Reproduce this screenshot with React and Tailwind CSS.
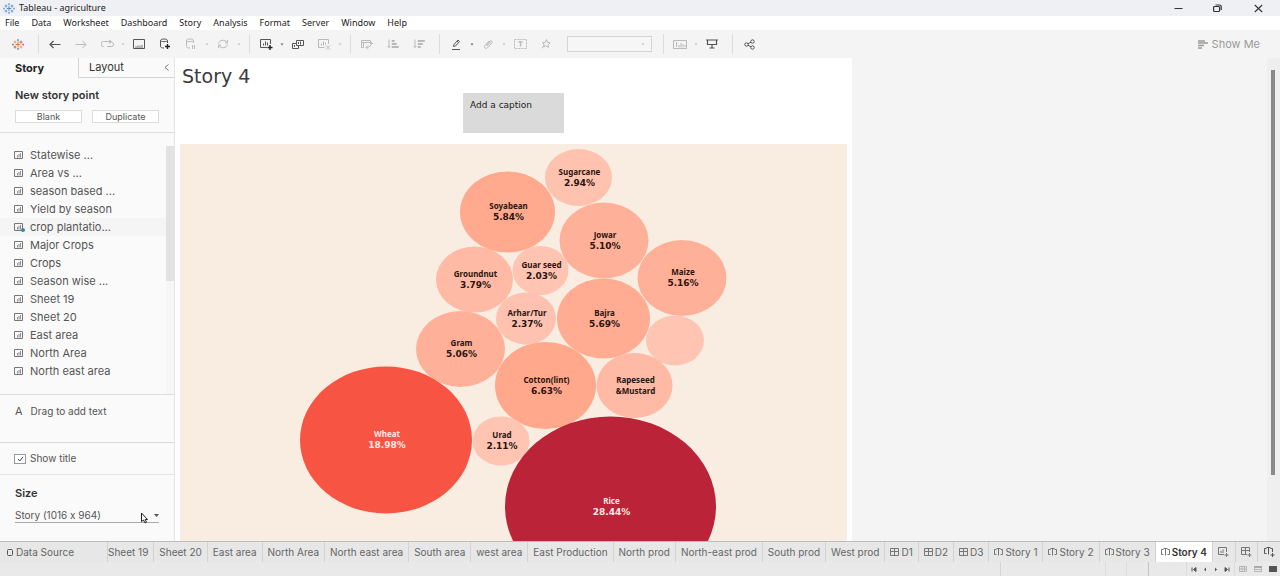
import React from "react";

const I = ({ children, className = "", w = 12, h = 12, box }) => (
  <svg width={w} height={h} viewBox={box || `0 0 ${w} ${h}`} fill="none" stroke="currentColor" strokeWidth="1" className={`shrink-0 ${className}`} aria-hidden="true">
    {children}
  </svg>
);

const TableauMark = ({ tint }) => (
  <I w={12} h={11}>
    <path d="M6 3v5M3.7 5.5h4.6" stroke={tint ? "#5d8fc4" : "#e8762d"} />
    <path d="M6 0v2.4M5 1.2h2M6 8.6V11M5 9.8h2" stroke={tint ? "#7fa8d6" : "#7a91ad"} />
    <path d="M3 1.6v3M1.6 3h2.8M9 6.6v3M7.6 8h2.8" stroke={tint ? "#6c9ccd" : "#eb9a6a"} />
    <path d="M9 1.6v3M7.6 3h2.8M3 6.6v3M1.6 8h2.8" stroke={tint ? "#6c9ccd" : "#7b8694"} />
    <path d="M.8 4.6v2M0 5.5h1.8M11.2 4.6v2M10.2 5.5H12" stroke={tint ? "#7fa8d6" : "#d0647a"} />
  </I>
);

const Tool = ({ label, dim, children }) => (
  <button aria-label={label} className={`flex h-6 w-[26px] shrink-0 items-center justify-center ${dim ? "text-[#b9b9b9]" : "text-[#555]"}`}>
    {children}
  </button>
);
const Dot = ({ dim }) => (
  <span className="flex w-[6px] shrink-0 justify-center">
    <I w={4} h={3} className={dim ? "text-[#c4c4c4]" : "text-[#666]"}>
      <path d="M.5 .5h3L2 2.5z" fill="currentColor" stroke="none" />
    </I>
  </span>
);
const Sep = () => (
  <span className="flex w-[11px] shrink-0 pl-[7px]">
    <span className="h-5 w-px bg-[#dcdcdc]" />
  </span>
);

const menus = ["File", "Data", "Worksheet", "Dashboard", "Story", "Analysis", "Format", "Server", "Window", "Help"];

const sheets = ["Statewise ...", "Area vs ...", "season based ...", "Yield by season", "crop plantatio...", "Major Crops", "Crops", "Season wise ...", "Sheet 19", "Sheet 20", "East area", "North Area", "North east area"];

const SheetIcon = ({ used }) => (
  <I w={11} h={10} className="text-[#777]">
    <path d="M.5 1.5h8v7h-8z" />
    <path d="M3.5 5v2.5M5 4v3.5M6.5 3v4.5" strokeWidth=".8" />
    {used && <circle cx="9" cy="8" r="2" fill="#3b84a8" stroke="none" />}
  </I>
);
const DashIcon = () => (
  <I w={9} h={8} className="text-[#777]">
    <path d="M.5 .5h8v7h-8zM4.500 .5v7M.5 3.5h8" />
  </I>
);
const StoryIcon = () => (
  <I w={9} h={8} className="text-[#777]">
    <path d="M2.500 6.500H.5v-5h2M6.500 6.500h2v-5h-2M2.500 .5h4M4.500 .5v7" />
  </I>
);

const tabs = [
  ["Sheet 20"], ["East area"], ["North Area"], ["North east area"], ["South area"], ["west area"],
  ["East Production"], ["North prod"], ["North-east prod"], ["South prod"], ["West prod"],
  ["D1", "dash"], ["D2", "dash"], ["D3", "dash"],
  ["Story 1", "story"], ["Story 2", "story"], ["Story 3", "story"], ["Story 4", "story"],
];

const bubbles = [
  ["Sugarcane", "2.94%", 398.5, 33.5, 33.5, 28.5, "#ffc2af"],
  ["Soyabean", "5.84%", 327.5, 68, 47.5, 40.5, "#ffaa8f"],
  ["Jowar", "5.10%", 424, 96.5, 44.5, 38, "#ffb098"],
  ["Maize", "5.16%", 502, 134, 44.5, 38, "#ffb098"],
  ["Groundnut", "3.79%", 294.500, 135.5, 38.5, 33, "#ffbaa5"],
  ["Guar seed", "2.03%", 360.5, 126.5, 28, 24.5, "#ffc4b2"],
  ["Arhar/Tur", "2.37%", 346, 174.5, 30, 26, "#ffc2b0"],
  ["Bajra", "5.69%", 423.5, 174.5, 46.5, 40, "#ffac92"],
  ["", "", 495, 196.5, 29, 25, "#ffc4b2"],
  ["Gram", "5.06%", 280.5, 205, 44.5, 38, "#ffb098"],
  ["Cotton(lint)", "6.63%", 365.5, 241.5, 50.5, 43.5, "#ffa88c"],
  ["Rapeseed", "&Mustard", 454.5, 241.5, 38, 32.5, "#ffbaa5"],
  ["Urad", "2.11%", 321, 297, 28.5, 24.5, "#ffc4b2"],
  ["Wheat", "18.98%", 206, 296, 86, 73.5, "#f85444"],
  ["Rice", "28.44%", 430.5, 362.5, 105.5, 90, "#bb2338"],
];

function Toolbar() {
  return (
    <div className="flex h-7 shrink-0 items-center bg-[#f4f4f4] pl-[5px]">
      <Tool label="Start page"><TableauMark /></Tool>
      <Sep />
      <Tool label="Undo"><I w={12} h={9}><path d="M11.500 4.500H1M4.500 1L1 4.500 4.500 8" strokeWidth="1.2" /></I></Tool>
      <Tool label="Redo" dim><I w={12} h={9}><path d="M.5 4.500H11M7.500 1L11 4.500 7.500 8" /></I></Tool>
      <Tool label="Replay" dim><I w={13} h={8}><path d="M3 6.500H2.500a2.500 2.500 0 0 1 0-5H10M8 0l2.500 1.500L8 3.500M10.500 2.500a2 2 0 0 1 0 4H6" /></I></Tool>
      <Dot dim />
      <Tool label="Save"><I w={12} h={10}><path d="M.5 .5h11v9H.5z" /><path d="M3 9.500V7M5 9.500V6.500M7 9.500V6.500M9 9.500V6" strokeWidth=".8" /></I></Tool>
      <Tool label="New data source"><I w={12} h={12}><path d="M8.500 5V2.500C8.500 0.500 1.500 .5 1.500 2.500v6c0 1 1.500 1.500 3.500 1.500M1.500 2.500c0 1.500 7 1.500 7 0" /><path d="M8.500 6v5M6 8.500h5" strokeWidth="1.4" stroke="#222" /></I></Tool>
      <Tool label="Pause updates" dim><I w={12} h={12}><path d="M8.500 5V2.500C8.500 0.500 1.500 .5 1.500 2.500v6c0 1 1.500 1.500 3.500 1.500M1.500 2.500c0 1.500 7 1.500 7 0M7.500 7v4M9.500 7v4" /></I></Tool>
      <Dot dim />
      <Tool label="Refresh" dim><I w={12} h={10}><path d="M1.500 4.500C2 1 8 0 10 3.500M10.500 1v3H8M10.500 5.500C10 9 4 10 2 6.500M1.500 9V6H4" /></I></Tool>
      <Dot dim />
      <Sep />
      <Tool label="New worksheet"><I w={13} h={12}><path d="M7 9.500H.5v-8h10V6M3.500 5.500v2M5.500 3.500v4M7.500 4.500v3" /><path d="M10 7v5M7.500 9.500h5" strokeWidth="1.4" stroke="#222" /></I></Tool>
      <Dot />
      <Tool label="Duplicate"><I w={13} h={11}><path d="M4.500 1.500h7v5h-7zM4.500 4.500h-4v5h6v-3M6.500 3v2M8.500 2.500v3M2.500 6v2" /></I></Tool>
      <Tool label="Clear sheet" dim><I w={13} h={12}><path d="M6.500 9.500h-6v-8h10V6M3.500 5.500v2M5.500 3.500v4M7.500 4.500v2M8 7.500l4 4M12 7.500l-4 4" /></I></Tool>
      <Dot dim />
      <Sep />
      <Tool label="Swap rows and columns" dim><I w={12} h={11}><path d="M.5 1.500h9v2h-9zM.5 3.500v5h2v-5M10.500 3.500c0 3-2 5-5 5M7 6.500l-2 2 2 2M9 5L10.500 3.500 12 5" /></I></Tool>
      <Tool label="Sort ascending" dim><I w={12} h={10}><path d="M2 .5v8M.5 7L2 8.500 3.500 7M5 1.500h2.500v1H5zM5 4.500h4.500v1H5zM5 7.500h6.500v1H5z" /></I></Tool>
      <Tool label="Sort descending" dim><I w={12} h={10}><path d="M2 .5v8M.5 7L2 8.500 3.500 7M5 1.500h6.500v1H5zM5 4.500h4.500v1H5zM5 7.500h2.500v1H5z" /></I></Tool>
      <Sep />
      <Tool label="Highlight"><I w={10} h={11}><path d="M1 10.500h8M2.500 7.500L3 5.500 7 1l1.500 1.500L4.500 7zM6 2l1.500 1.500" /></I></Tool>
      <Dot />
      <Tool label="Group members" dim><I w={11} h={11}><path d="M3 6.500L7 2c1-1 3 .5 2 1.800L4.500 8.800c-1.500 1.500-4-.3-2.700-2L6 2M4 7l3.500-4" /></I></Tool>
      <Dot dim />
      <Tool label="Show mark labels" dim><I w={13} h={10}><path d="M.5 .5h12v9H.5z" strokeDasharray="2 1" /><path d="M4.500 3h4M6.500 3v4.500" strokeWidth="1.3" /></I></Tool>
      <Tool label="Fix axes" dim><I w={10} h={10}><path d="M5.500 .5l1 2.700 2.700.6-2 1.900.2 2.600-2.600-1.500-2.300 1 .6-2.600L1.500 3.800l2.700-.5zM3 6.800L.8 9.300" /></I></Tool>
      <select aria-label="Fit" defaultValue="" className="ml-2 h-4 w-[85px] shrink-0 appearance-none border border-[#d5d5d5] bg-[#f6f6f6] text-[9px]">
        <option value=""></option>
      </select>
      <span className="-ml-3 mr-1.5 flex"><Dot dim /></span>
      <span className="ml-1 flex"><Sep /></span>
      <Tool label="Show cards" dim><I w={14} h={9}><path d="M.5 .5h13v8H.5zM3.500 2v5M6 5v2.500M8 3v4.500M10 4v3.500M12 5v2" /></I></Tool>
      <Dot dim />
      <Tool label="Presentation mode"><I w={12} h={10}><path d="M0 1h12M1.500 1v4.500h9V1M6 5.500v3M3.500 9h5" strokeWidth="1.2" /></I></Tool>
      <Sep />
      <Tool label="Share"><I w={11} h={11}><circle cx="2.500" cy="5.500" r="1.700" /><circle cx="8.500" cy="2.500" r="1.700" /><circle cx="8.500" cy="8.500" r="1.700" /><path d="M4 4.700l3-1.500M4 6.300l3 1.500" /></I></Tool>
      <button className="ml-auto mr-5 flex items-center gap-1 text-[11px] text-[#9a9a9a]">
        <I w={10} h={9}><path d="M0 1h7M0 3h10M0 5.500h6M0 8h4" strokeWidth="1.5" /></I>
        Show Me
      </button>
    </div>
  );
}

function Sidebar() {
  return (
    <aside className="flex w-[175px] shrink-0 flex-col border-r border-[#e6e6e6] bg-[#fafafa] text-[#555]">
      <div className="flex h-5 shrink-0 text-[11px]">
        <button className="w-[78px] shrink-0 pl-[15px] text-left font-bold text-[#222]">Story</button>
        <button className="flex-1 border-b border-l border-[#d4d4d4] pl-2.5 text-left text-[#333]">Layout</button>
        <button aria-label="Collapse pane" className="flex w-2.5 items-center border-b border-[#d4d4d4] text-[#777]">
          <I w={5} h={7}><path d="M4.500 .5l-3.500 3 3.500 3" /></I>
        </button>
      </div>
      <section className="shrink-0 border-b border-[#dedede] px-[15px] pb-[9px] pt-2.5">
        <h2 className="text-[11px] font-semibold leading-[15px] text-[#333]">New story point</h2>
        <div className="mt-[7px] flex gap-2.5 text-[9px]">
          <button className="h-[13px] w-[67px] border border-[#dcdcdc] bg-white leading-[11px]">Blank</button>
          <button className="h-[13px] w-[67px] border border-[#dcdcdc] bg-white leading-[11px]">Duplicate</button>
        </div>
      </section>
      <div className="flex min-h-0 flex-1 overflow-hidden pt-[13px]">
        <ul className="min-w-0 flex-1">
          {sheets.map((s) => (
            <li key={s} className={`flex h-[18px] items-center gap-[5px] pl-3.5 text-[11px] ${s.startsWith("crop") ? "bg-[#f5f5f5]" : ""}`}>
              <SheetIcon used={s.startsWith("crop")} />
              {s}
            </li>
          ))}
        </ul>
        <div className="w-2 bg-[#f6f6f6]">
          <div className="h-[135px] bg-[#e2e2e2]" />
        </div>
      </div>
      <div className="flex h-12 shrink-0 gap-2 border-t border-[#dcdcdc] pl-[15px] pt-[9px] text-[10px] leading-[15px]">
        <span className="text-[11px]">A</span>
        <span>Drag to add text</span>
      </div>
      <label className="flex h-8 shrink-0 items-center gap-1 border-t border-[#d8d8d8] pl-3.5 text-[10px]">
        <span className="grid place-items-center">
          <input type="checkbox" defaultChecked className="col-start-1 row-start-1 h-2.5 w-3 appearance-none border border-[#999] bg-white" />
          <I w={7} h={6} className="pointer-events-none col-start-1 row-start-1 text-[#444]"><path d="M1 3l1.800 2L6 .8" /></I>
        </span>
        Show title
      </label>
      <section className="h-[67px] shrink-0 border-t border-[#e4e4e4] px-[15px] pt-[11px]">
        <label htmlFor="size" className="block text-[11px] font-semibold leading-[15px] text-[#333]">Size</label>
        <div className="relative mt-[7px] flex h-[15px] items-center border-b border-[#aaa]">
          <select id="size" className="w-full appearance-none bg-transparent text-[10px]">
            <option>Story (1016 x 964)</option>
          </select>
          <I w={5} h={3} className="pointer-events-none absolute right-0 text-[#555]"><path d="M0 0h5L2.500 3z" fill="currentColor" stroke="none" /></I>
          <I w={9} h={12} className="pointer-events-none absolute right-2.5 top-1 text-[#222]"><path d="M1.500 1v8.500l2-1.500 1.500 3 1.500-.8-1.300-2.700H7.500z" fill="#fff" /></I>
        </div>
      </section>
    </aside>
  );
}

function Bubbles() {
  return (
    <svg width="667" height="640" viewBox="0 0 667 640" className="block" role="img" aria-label="Crop share">
      {bubbles.map(([name, pct, cx, cy, rx, ry, fill]) => {
        const light = name === "Wheat" || name === "Rice";
        const isPct = pct.endsWith("%");
        return (
          <g key={name + cx}>
            <ellipse cx={cx} cy={cy} rx={rx} ry={ry} fill={fill} />
            <g textAnchor="middle" className={`font-bold ${light ? "fill-[#ffe9e4]" : "fill-[#2b1410]"}`}>
              <text x={cx + 1} y={cy - 3} className="font-['Noto_Sans',sans-serif] text-[8px]">{name}</text>
              <text x={cx + 1} y={cy + 8} className={isPct ? "font-['DejaVu_Sans',sans-serif] text-[9px]" : "font-['Noto_Sans',sans-serif] text-[8px]"}>{pct}</text>
            </g>
          </g>
        );
      })}
    </svg>
  );
}

export default function App() {
  return (
    <div className="flex h-screen flex-col overflow-hidden bg-[#f4f4f4] font-['Inter',sans-serif] [font-variant-ligatures:no-contextual]">
      <header className="flex h-4 shrink-0 items-center bg-[#eff0f4] pl-[3px] font-['Noto_Sans',sans-serif] text-[9px] text-[#222]">
        <TableauMark tint />
        <h1 className="ml-1">Tableau - agriculture</h1>
        <div className="ml-auto flex text-[#333]">
          <button aria-label="Minimize" className="flex w-[39px] justify-center"><I w={9} h={9}><path d="M.5 4.500h8" /></I></button>
          <button aria-label="Restore" className="flex w-[39px] justify-center"><I w={9} h={9}><rect x=".6" y="2.500" width="6" height="5" rx="1" strokeWidth="1.2" /><path d="M2.500 1h4a1.700 1.700 0 0 1 1.700 1.700V6" strokeWidth="1.2" /></I></button>
          <button aria-label="Close" className="flex w-[43px] justify-center"><I w={9} h={9}><path d="M.8 1l7.400 7M8.200 1L.8 8" strokeWidth="1.100" /></I></button>
        </div>
      </header>
      <nav className="flex h-3.5 shrink-0 items-center gap-3 bg-white pl-[5px] font-['Noto_Sans',sans-serif] text-[9px] text-[#222]">
        {menus.map((m) => <button key={m}>{m}</button>)}
      </nav>
      <Toolbar />
      <div className="flex min-h-0 flex-1">
        <Sidebar />
        <main className="shrink-0 overflow-hidden bg-white px-[5px]">
          <h2 className="pl-0.5 pt-[7px] font-['DejaVu_Sans',sans-serif] text-[19px] leading-[22px] text-[#3c3c3c]">Story 4</h2>
          <div className="mx-auto mb-[11px] mt-1.5 h-10 w-[101px] bg-[#dadada] px-[7px] pt-[5px] font-['DejaVu_Sans',sans-serif] text-[9px] leading-[15px] text-[#222]">Add a caption</div>
          <div className="bg-[#f9ede1]">
            <Bubbles />
          </div>
        </main>
        <div className="ml-auto w-[13px] bg-[#efefef] pl-1 pt-3">
          <div className="h-[405px] w-1 bg-[#8a8a8a]" />
        </div>
      </div>
      <div className="flex h-[21px] shrink-0 border-t border-[#bdbdbd] bg-[#e7e7e7] text-[10px] text-[#666]">
        <button className="flex w-[107px] shrink-0 items-center gap-[3px] pl-[7px]">
          <I w={6} h={7} className="text-[#555]"><rect x=".5" y=".5" width="5" height="6" rx="1" /></I>
          Data Source
        </button>
        <button className="shrink-0 border-l border-[#cfcfcf] pr-[5px]">Sheet 19</button>
        {tabs.map(([t, kind]) => (
          <button key={t} className={`flex shrink-0 items-center gap-0.5 whitespace-nowrap border-l border-[#d3d3d3] px-[5px] ${t === "Story 4" ? "bg-white font-semibold text-[#333]" : ""}`}>
            {kind === "dash" && <DashIcon />}
            {kind === "story" && <StoryIcon />}
            {t}
          </button>
        ))}
        <button aria-label="New worksheet" className="flex flex-1 items-center justify-center border-l border-[#d3d3d3] text-[#777]"><I w={11} h={10}><path d="M6 7.500H.5v-7h8V5M3 4v2M5 2.500V6M8.500 6v4M6.500 8h4" /></I></button>
        <button aria-label="New dashboard" className="flex flex-1 items-center justify-center border-l border-[#d3d3d3] text-[#777]"><I w={11} h={10}><path d="M6 7.500H.5v-7h8V5M4.500 .5v7M.5 3.500h8M8.500 6v4M6.500 8h4" /></I></button>
        <button aria-label="New story" className="flex flex-1 items-center justify-center border-l border-[#d3d3d3] text-[#555]"><I w={11} h={10}><path d="M2.500 6.500h-2v-5h2M2.500 .5h4M4.500 .5v7M6.500 1.500h2V5M8.500 6v4M6.500 8h4" /></I></button>
      </div>
      <footer className="flex h-3.5 shrink-0 items-center justify-end bg-[#e9e9e9] text-[#555]">
        <span className="h-full w-[105px] border-l border-[#d5d5d5]" />
        <span className="h-full w-[21px] border-l border-[#dcdcdc]" />
        <span className="h-full w-[22px] border-l border-[#dcdcdc]" />
        <span className="h-full w-[38px] border-l border-[#c5c5c5]" />
        <div className="flex h-full items-center gap-[5px] border-l border-[#dcdcdc] px-1">
          <button aria-label="First"><I w={6} h={5}><path d="M1 .5v4M5 .5v4L2.500 2.500z" fill="currentColor" /></I></button>
          <button aria-label="Previous"><I w={6} h={5}><path d="M4 .5v4L2 2.500z" fill="currentColor" stroke="none" /></I></button>
          <button aria-label="Next"><I w={6} h={5}><path d="M2 .5v4l2-2z" fill="currentColor" stroke="none" /></I></button>
          <button aria-label="Last"><I w={6} h={5}><path d="M5 .5v4M1 .5v4l2.500-2z" fill="currentColor" /></I></button>
        </div>
        <div className="flex h-full items-center gap-[7px] border-l border-[#dcdcdc] pl-1 pr-[3px]">
          <button aria-label="Show tabs" className="text-[#aaa]"><I w={8} h={6}><path d="M.5 .5h7v5h-7zM.5 3h7M3 .5v5M5.500 .5v5" strokeWidth=".8" /></I></button>
          <button aria-label="Show filmstrip" className="text-[#aaa]"><I w={8} h={6}><path d="M0 1h8" strokeWidth="2" /><path d="M.5 .5h7v5h-7zM1 3.500h6" strokeWidth=".8" /></I></button>
          <button aria-label="Show sheet sorter" className="text-[#555]"><I w={8} h={6}><path d="M0 0h8v6H0z" fill="currentColor" stroke="none" /></I></button>
        </div>
      </footer>
    </div>
  );
}
